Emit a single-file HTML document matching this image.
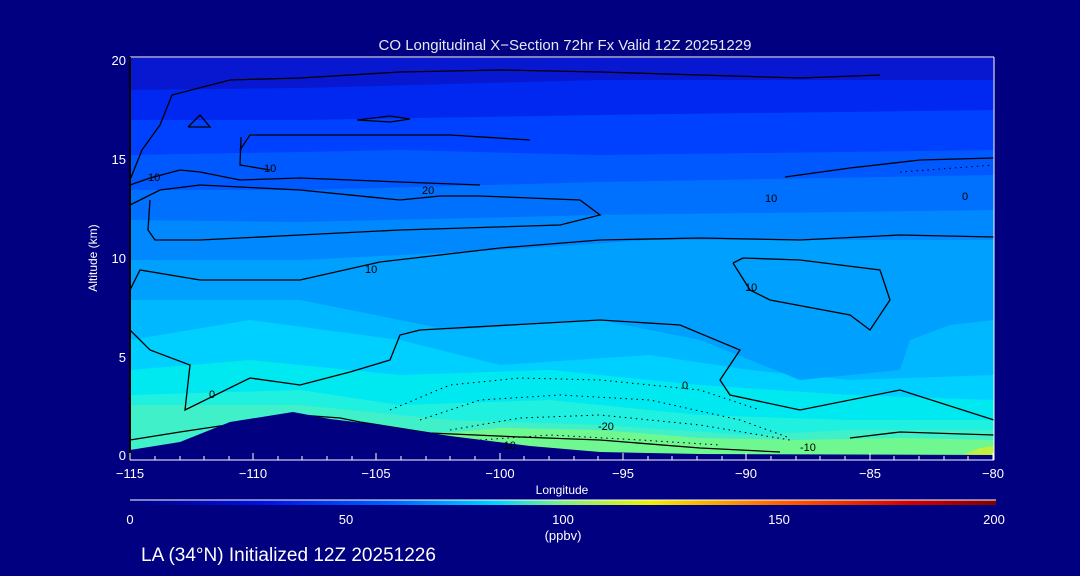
<!DOCTYPE html>
<html><head><meta charset="utf-8"><style>
html,body{margin:0;padding:0;background:#000080;width:1080px;height:576px;overflow:hidden}
svg{display:block}
text{font-family:"Liberation Sans",sans-serif;fill:#fff}
</style></head><body>
<svg width="1080" height="576" viewBox="0 0 1080 576" xmlns="http://www.w3.org/2000/svg">
<defs>
<linearGradient id="cb" x1="0" x2="1" y1="0" y2="0">
<stop offset="0" stop-color="#000080"/>
<stop offset="0.15" stop-color="#0010e0"/>
<stop offset="0.3" stop-color="#0060ff"/>
<stop offset="0.42" stop-color="#00d0ff"/>
<stop offset="0.5" stop-color="#80f080"/>
<stop offset="0.6" stop-color="#f0f000"/>
<stop offset="0.75" stop-color="#ff6000"/>
<stop offset="0.9" stop-color="#d00000"/>
<stop offset="1" stop-color="#800000"/>
</linearGradient>
</defs>
<rect x="130" y="58" width="864" height="398" fill="#40f0c8"/>
<polygon fill="#70f890" points="380,456 420,435 500,428 600,430 700,438 800,440 900,438 994,440 994,456"/>
<polygon fill="#c0f040" points="960,456 980,448 994,446 994,456"/>
<polygon fill="#20f0e0" points="130,58 994,58 994,430 850,430 750,435 600,425 450,420 300,405 130,405"/>
<polygon fill="#00e8f0" points="130,58 994,58 994,420 850,420 700,415 550,400 400,405 300,390 130,395"/>
<polygon fill="#00d0ff" points="130,58 994,58 994,400 850,395 700,385 550,370 400,375 250,360 130,370"/>
<polygon fill="#00b8ff" points="130,58 994,58 994,375 850,380 750,370 650,355 500,365 400,340 250,320 130,340"/>
<polygon fill="#00a0ff" points="130,58 994,58 994,320 950,325 910,340 900,370 800,380 700,340 600,320 450,330 300,300 130,300"/>
<polygon fill="#0088ff" points="130,58 994,58 994,240 650,240 500,250 300,260 130,260"/>
<polygon fill="#0070ff" points="130,58 994,58 994,210 600,215 300,222 130,220"/>
<polygon fill="#0058ff" points="130,58 994,58 994,175 600,182 300,190 130,190"/>
<polygon fill="#0040ff" points="130,58 994,58 994,150 600,155 400,150 300,152 130,155"/>
<polygon fill="#0028f0" points="130,58 994,58 994,110 600,115 300,120 130,120"/>
<polygon fill="#0818d0" points="130,58 994,58 994,80 600,80 300,88 130,90"/>
<g fill="none" stroke="#000" stroke-width="1.3">
<polyline points="130,180 142,150 160,125 172,95 230,80 300,78 400,72 500,70 600,72 700,75 800,78 880,75"/>
<polyline points="240,150 250,135 350,135 450,135 530,140"/>
<polyline points="130,185 150,178 180,170 200,172 240,180 300,178 400,182 480,185"/>
<polyline points="130,205 160,190 200,185 300,190 400,200 440,196 480,196 580,200 600,215 560,225 400,230 300,235 200,240 155,240 148,230 150,200"/>
<polyline points="130,290 140,270 200,280 300,280 380,262 500,248 600,240 700,238 800,240 900,235 994,237"/>
<polyline points="733,263 743,258 800,260 880,270 890,300 870,330 850,315 770,300 750,290 733,263"/>
<polyline points="785,177 850,168 920,160 994,158"/>
<polyline points="130,330 150,350 190,365 185,410 250,378 300,385 350,372 390,360 400,335 420,330 600,320 680,325 740,350 720,380 730,395 800,410 900,390 994,420"/>
<polyline points="130,440 180,432 260,420 300,415 340,418 360,422 430,433 520,437 600,440 700,448 780,452"/>
<polyline points="850,438 900,432 994,435"/>
<polyline points="241,137 240,165 270,170"/>
<polyline points="188,127 200,115 210,127 188,127"/>
<polyline points="357,120 390,116 410,119 390,122 357,120"/>
</g>
<g fill="none" stroke="#000" stroke-width="1" stroke-dasharray="1.5,4">
<polyline points="390,410 450,385 520,378 600,380 700,390 760,410"/>
<polyline points="420,420 480,400 560,395 650,400 740,420 790,438"/>
<polyline points="450,430 520,418 600,415 700,425 790,440"/>
<polyline points="480,440 550,435 640,440 720,445"/>
<polyline points="900,172 994,165"/>
</g>
<path d="M130,456 L130,450 L180,442 L230,422 L293,412 L330,419 L380,425 L450,436 L530,446 L600,452 L700,454 L994,455 L994,457 L130,457 Z" fill="#000080"/>
<g font-size="11">
<text x="148" y="181" style="fill:#000">10</text>
<text x="264" y="172" style="fill:#000">10</text>
<text x="422" y="194" style="fill:#000">20</text>
<text x="365" y="273" style="fill:#000">10</text>
<text x="765" y="202" style="fill:#000">10</text>
<text x="745" y="291" style="fill:#000">10</text>
<text x="962" y="200" style="fill:#000">0</text>
<text x="682" y="389" style="fill:#000">0</text>
<text x="209" y="398" style="fill:#000">0</text>
<text x="598" y="430" style="fill:#000">-20</text>
<text x="500" y="449" style="fill:#000">-10</text>
<text x="800" y="451" style="fill:#000">-10</text>
</g>
<line x1="130" y1="57" x2="994" y2="57" stroke="#fff" stroke-width="1"/>
<line x1="994" y1="57" x2="994" y2="460" stroke="#fff" stroke-width="1"/>
<line x1="130" y1="57" x2="130" y2="460" stroke="#000" stroke-width="2"/>
<line x1="130" y1="460" x2="994" y2="460" stroke="#fff" stroke-width="1"/>
<g stroke="#fff" stroke-width="1">
<path d="M130,460v-7M253,460v-7M376,460v-7M500,460v-7M623,460v-7M746,460v-7M870,460v-7M993,460v-7"/>
<path d="M155,460v-4M180,460v-4M204,460v-4M229,460v-4M278,460v-4M302,460v-4M327,460v-4M352,460v-4M401,460v-4M426,460v-4M450,460v-4M475,460v-4M524,460v-4M549,460v-4M574,460v-4M598,460v-4M648,460v-4M672,460v-4M697,460v-4M722,460v-4M771,460v-4M796,460v-4M820,460v-4M845,460v-4M894,460v-4M919,460v-4M944,460v-4M968,460v-4"/>
</g>
<text x="565" y="50" font-size="15" text-anchor="middle" style="fill:#e8e8f0">CO Longitudinal X−Section 72hr  Fx Valid 12Z 20251229</text>
<g font-size="13" text-anchor="end">
<text x="126" y="65">20</text><text x="126" y="164">15</text><text x="126" y="263">10</text><text x="126" y="362">5</text><text x="126" y="460">0</text>
</g>
<text x="97" y="258" font-size="12" text-anchor="middle" transform="rotate(-90 97 258)">Altitude (km)</text>
<g font-size="13" text-anchor="middle">
<text x="130" y="478">−115</text><text x="253" y="478">−110</text><text x="376" y="478">−105</text><text x="500" y="478">−100</text><text x="623" y="478">−95</text><text x="746" y="478">−90</text><text x="870" y="478">−85</text><text x="993" y="478">−80</text>
</g>
<text x="562" y="494" font-size="12" text-anchor="middle">Longitude</text>
<rect x="130" y="500" width="866" height="5" fill="url(#cb)"/>
<line x1="130" y1="500" x2="996" y2="500" stroke="#fff" stroke-width="1"/>
<g font-size="13" text-anchor="middle">
<text x="130" y="524">0</text><text x="346" y="524">50</text><text x="563" y="524">100</text><text x="779" y="524">150</text><text x="994" y="524">200</text>
<text x="563" y="540">(ppbv)</text>
</g>
<text x="141" y="561" font-size="19">LA (34°N) Initialized 12Z 20251226</text>
</svg>
</body></html>
